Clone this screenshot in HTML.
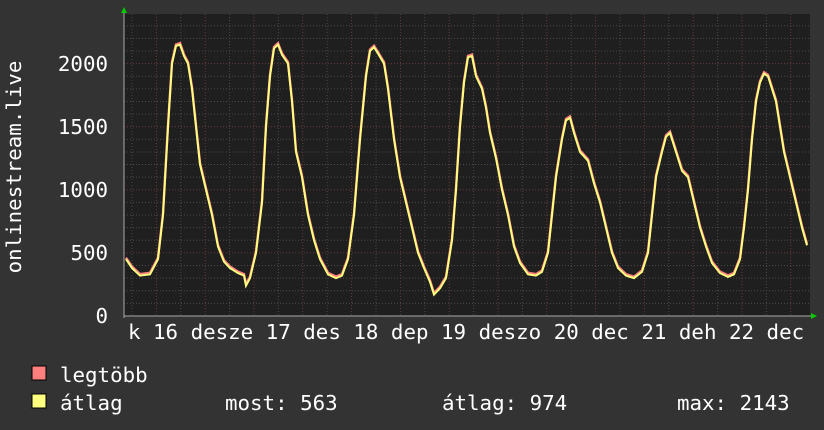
<!DOCTYPE html><html><head><style>
body{margin:0;background:#333;width:824px;height:430px;overflow:hidden}
svg{display:block}
text{font-family:"DejaVu Sans Mono","Liberation Mono",monospace;font-size:20.8px;fill:#fff}
</style></head><body>
<svg id="g" width="824" height="430" xmlns="http://www.w3.org/2000/svg">
<rect x="0" y="0" width="824" height="430" fill="#333"/>
<rect x="124" y="14" width="686" height="302" fill="#1f1f1f"/>
<g id="grid"></g>
<polyline id="p1" fill="none" stroke="#ff7f7f" stroke-width="2.4"/>
<polyline id="p2" fill="none" stroke="#ffff7f" stroke-width="2"/>
<line x1="124" y1="316" x2="812" y2="316" stroke="#aaa" stroke-width="1"/>
<line x1="124" y1="12" x2="124" y2="318" stroke="#aaa" stroke-width="1"/>
<polygon points="121,13 127,13 124,7" fill="#0c0"/>
<polygon points="811,313 811,319 817,316" fill="#0c0"/>
<text x="108" y="71" text-anchor="end">2000</text>
<text x="108" y="134" text-anchor="end">1500</text>
<text x="108" y="197" text-anchor="end">1000</text>
<text x="108" y="260" text-anchor="end">500</text>
<text x="108" y="323" text-anchor="end">0</text>
<text x="128" y="339" xml:space="preserve">k 16 desze 17 des 18 dep 19 deszo 20 dec 21 deh 22 dec</text>
<text transform="translate(21,167) rotate(-90)" text-anchor="middle">onlinestream.live</text>
<rect x="32" y="366" width="14" height="14" fill="#ff7f7f" stroke="#000" stroke-width="1"/>
<rect x="32" y="394" width="14" height="14" fill="#ffff7f" stroke="#000" stroke-width="1"/>
<text x="60" y="382">legtöbb</text>
<text x="60" y="410">átlag</text>
<text x="225" y="410">most: 563</text>
<text x="442" y="410">átlag: 974</text>
<text x="677" y="410">max: 2143</text>
</svg>
<script>
var d=[126,450,132,380,140,320,150,330,158,450,163,800,168,1500,172,2000,176,2140,180,2150,184,2060,188,2000,192,1800,196,1500,200,1200,206,1000,212,800,218,550,224,430,230,380,238,340,244,320,246,240,250,300,256,500,262,900,266,1500,270,1900,274,2120,278,2150,282,2070,288,2000,292,1700,296,1300,302,1100,308,800,314,600,320,450,328,330,336,300,342,320,348,450,354,800,360,1400,366,1900,370,2100,374,2130,378,2080,384,2000,388,1800,394,1400,400,1100,406,900,412,700,418,500,424,380,430,270,434,170,440,220,446,300,452,600,456,1000,460,1500,464,1850,468,2050,472,2060,476,1900,482,1800,486,1650,490,1450,496,1250,502,1000,508,800,514,550,520,420,528,330,536,320,542,350,548,500,552,800,556,1100,562,1400,566,1550,570,1570,574,1450,580,1300,588,1230,594,1050,600,900,606,700,612,500,618,380,626,320,634,300,642,350,648,500,652,800,656,1100,662,1300,666,1420,670,1450,676,1300,682,1150,688,1100,694,900,700,700,706,550,712,420,720,340,728,310,734,330,740,450,744,700,748,1000,752,1400,756,1700,760,1850,764,1920,768,1900,772,1800,776,1700,780,1500,784,1300,790,1100,796,900,802,700,807,560];
var a=[],b=[];for(var i=0;i<d.length;i+=2){var y=316-d[i+1]*0.1262;a.push(d[i]+','+(y-1.5));b.push(d[i]+','+y);}
document.getElementById('p1').setAttribute('points',a.join(' '));
document.getElementById('p2').setAttribute('points',b.join(' '));
var g='';for(var v=100;v<=2300;v+=100){var y=316-v*0.1262;g+='<line x1="124" x2="810" y1="'+y+'" y2="'+y+'" stroke="'+(v%500==0?'#6a3a3a':'#4a4a4a')+'" stroke-dasharray="1,2"/>';}
for(var k=0;k<29;k++){var x=132+k*24.4;if(x>810)break;g+='<line y1="14" y2="316" x1="'+x+'" x2="'+x+'" stroke="'+(k%2==1?'#6a3a3a':'#4a4a4a')+'" stroke-dasharray="1,2"/>';}
document.getElementById('grid').innerHTML=g;
</script>
</body></html>
